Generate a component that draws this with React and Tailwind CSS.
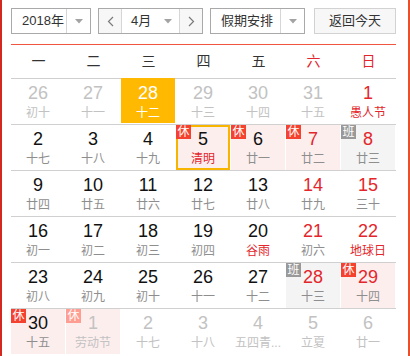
import React from 'react';

const weekdays = ['一', '二', '三', '四', '五', '六', '日'];

// o: other month, r: red number, f: festival (red lunar), s: selected, h: 'rest' | 'work', b: bordered
const rows = [
    [
        { d: 26, l: '初十', o: 1 },
        { d: 27, l: '十一', o: 1 },
        { d: 28, l: '十二', o: 1, s: 1 },
        { d: 29, l: '十三', o: 1 },
        { d: 30, l: '十四', o: 1 },
        { d: 31, l: '十五', o: 1 },
        { d: 1, l: '愚人节', r: 1, f: 1 },
    ],
    [
        { d: 2, l: '十七' },
        { d: 3, l: '十八' },
        { d: 4, l: '十九' },
        { d: 5, l: '清明', f: 1, h: 'rest', b: 1 },
        { d: 6, l: '廿一', h: 'rest' },
        { d: 7, l: '廿二', r: 1, h: 'rest' },
        { d: 8, l: '廿三', r: 1, h: 'work' },
    ],
    [
        { d: 9, l: '廿四' },
        { d: 10, l: '廿五' },
        { d: 11, l: '廿六' },
        { d: 12, l: '廿七' },
        { d: 13, l: '廿八' },
        { d: 14, l: '廿九', r: 1 },
        { d: 15, l: '三十', r: 1 },
    ],
    [
        { d: 16, l: '初一' },
        { d: 17, l: '初二' },
        { d: 18, l: '初三' },
        { d: 19, l: '初四' },
        { d: 20, l: '谷雨', f: 1 },
        { d: 21, l: '初六', r: 1 },
        { d: 22, l: '地球日', r: 1, f: 1 },
    ],
    [
        { d: 23, l: '初八' },
        { d: 24, l: '初九' },
        { d: 25, l: '初十' },
        { d: 26, l: '十一' },
        { d: 27, l: '十二' },
        { d: 28, l: '十三', r: 1, h: 'work' },
        { d: 29, l: '十四', r: 1, h: 'rest' },
    ],
    [
        { d: 30, l: '十五', h: 'rest' },
        { d: 1, l: '劳动节', o: 1, h: 'rest' },
        { d: 2, l: '十七', o: 1 },
        { d: 3, l: '十八', o: 1 },
        { d: 4, l: '五四青...', o: 1 },
        { d: 5, l: '立夏', o: 1 },
        { d: 6, l: '廿一', o: 1 },
    ],
];

const Caret = () => (
    <svg width="8" height="5" viewBox="0 0 8 5">
        <polygon points="0,0 8,0 4,4.5" fill="#a3a3a3" />
    </svg>
);

const Chevron = ({ dir }) => (
    <svg width="7" height="11" viewBox="0 0 7 11">
        <polyline
            points={dir === 'left' ? '6,1 1.5,5.5 6,10' : '1,1 5.5,5.5 1,10'}
            fill="none"
            stroke="#7a7a7a"
            strokeWidth="1.2"
        />
    </svg>
);

const DayCell = ({ c }) => {
    let num = 'text-[#111]';
    let lunar = 'text-[#8e8e8e]';
    if (c.o) {
        num = 'text-[#c2c2c2]';
        lunar = 'text-[#c2c2c2]';
    } else {
        if (c.r) num = 'text-[#e3262b]';
        if (c.f) lunar = 'text-[#e3262b]';
    }
    if (c.s) {
        num = 'text-white';
        lunar = 'text-white';
    }

    let bg = 'bg-white';
    if (c.s) bg = 'bg-[#ffb900]';
    else if (c.h === 'rest') bg = 'bg-[#fdeeee]';
    else if (c.h === 'work') bg = 'bg-[#f4f4f4]';

    return (
        <div className="relative h-[45px]">
            <div
                className={`mr-px h-full flex flex-col items-center ${bg} ${
                    c.b ? 'border-2 border-[#f7b500] pt-[2px]' : 'pt-[4px]'
                } ${c.s ? '-mt-px h-[46px] pt-[5px]' : ''}`}
            >
                <span className={`text-[18px] leading-[21px] ${num}`}>{c.d}</span>
                <span className={`mt-px whitespace-nowrap text-[12px] leading-[16px] ${lunar}`}>
                    {c.l}
                </span>
            </div>
            {c.h && (
                <span
                    className={`absolute top-0 left-0 w-[15px] h-[14px] text-center text-[12px] leading-[14px] text-white ${
                        c.h === 'work' ? 'bg-[#999999]' : c.o ? 'bg-[#ff9d92]' : 'bg-[#f5412f]'
                    }`}
                >
                    {c.h === 'work' ? '班' : '休'}
                </span>
            )}
        </div>
    );
};

export default function App() {
    return (
        <div className="w-[410px] h-[356px] overflow-hidden bg-white border-l-2 border-l-[#d3281f] border-r-2 border-r-[#ea4f2c] pl-[9px] pr-[12px] pt-[8px] font-['Liberation_Sans','Noto_Sans_CJK_SC',sans-serif]">
            {/* toolbar */}
            <div className="flex h-[26px] text-[13px] text-[#333]">
                <div className="w-[80px] flex border border-[#a9a9a9]">
                    <div className="w-[54px] flex items-center pl-[10px]">2018年</div>
                    <div className="flex-1 flex items-center justify-center border-l border-[#d6d6d6]">
                        <Caret />
                    </div>
                </div>

                <div className="ml-[7px] w-[105px] flex border border-[#a9a9a9]">
                    <div className="w-[22px] flex items-center justify-center bg-[#f7f7f7]">
                        <Chevron dir="left" />
                    </div>
                    <div className="w-[59px] flex items-center justify-between pl-[9px] pr-[7px] border-l border-r border-[#d6d6d6]">
                        <span>4月</span>
                        <Caret />
                    </div>
                    <div className="flex-1 flex items-center justify-center bg-[#f7f7f7]">
                        <Chevron dir="right" />
                    </div>
                </div>

                <div className="ml-[7px] w-[95px] flex border border-[#a9a9a9]">
                    <div className="w-[69px] flex items-center pl-[10px]">假期安排</div>
                    <div className="flex-1 flex items-center justify-center border-l border-[#d6d6d6]">
                        <Caret />
                    </div>
                </div>

                <button className="ml-[9px] w-[82px] flex items-center justify-center border border-[#d2d2d2] bg-[#f7f7f7] text-[#333]">
                    返回今天
                </button>
            </div>

            <div className="mt-[10px] h-px bg-[#f0553f]" />

            {/* weekdays */}
            <div className="grid grid-cols-7 h-[34px] items-center border-b border-[#cfcfcf] text-[14px] text-center">
                {weekdays.map((w, i) => (
                    <span key={w} className={i >= 5 ? 'text-[#e3262b]' : 'text-[#333]'}>
                        {w}
                    </span>
                ))}
            </div>

            {/* days */}
            {rows.map((row, ri) => (
                <div
                    key={ri}
                    className={`grid grid-cols-7 ${ri < rows.length - 1 ? 'h-[46px] border-b border-[#d0d0d0]' : 'h-[45px]'}`}
                >
                    {row.map((c, ci) => (
                        <DayCell key={ci} c={c} />
                    ))}
                </div>
            ))}
        </div>
    );
}
